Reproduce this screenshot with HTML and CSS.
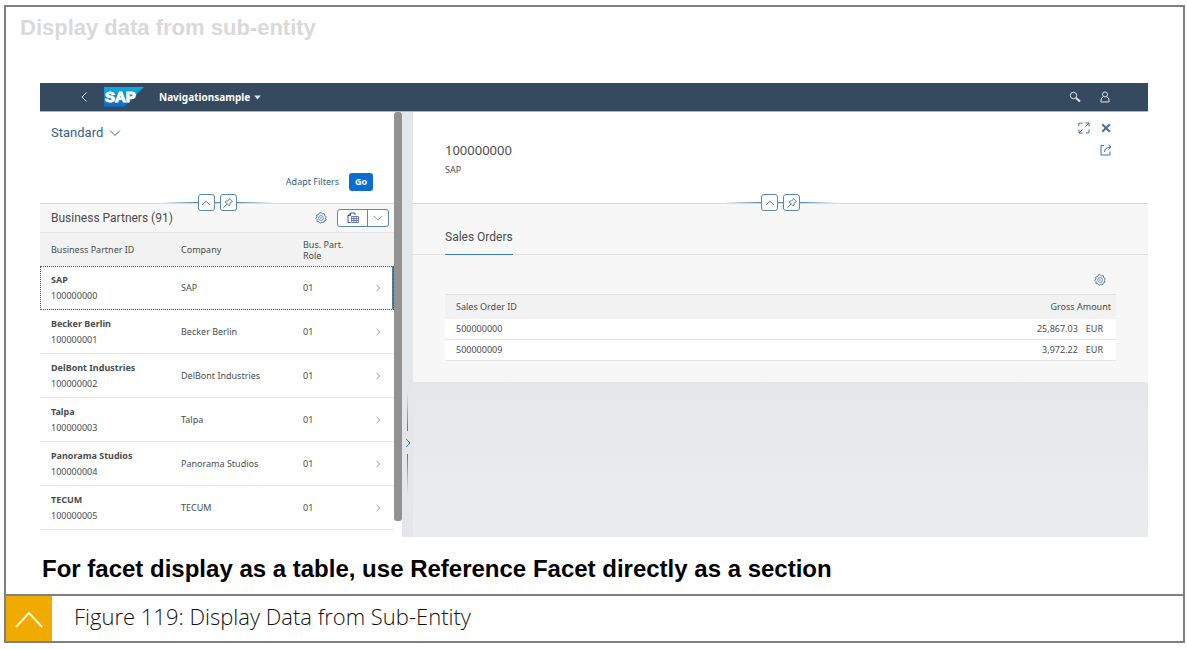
FILE: index.html
```html
<!DOCTYPE html>
<html lang="en">
<head>
<meta charset="utf-8">
<title>Display Data from Sub-Entity</title>
<link rel="stylesheet" href="styles.css">
</head>
<body>
<svg class="defs" aria-hidden="true">
  <symbol id="gear" viewBox="0 0 12 12"><path d="M6 .6 7.4 1.8 9.3 1.7 9.6 3.5 11.2 4.6 10.5 6.3 11.1 8.1 9.4 8.9 8.6 10.6 6.8 10.2 5.2 11.2 4 9.8 2.1 9.6 2.1 7.7.8 6.4 1.9 4.9 1.7 3 3.5 2.5 4.4.9Z" stroke-width=".9"/><circle cx="6" cy="6" r="2.4" stroke-width=".7"/><circle cx="6" cy="6" r=".7" stroke="none" fill="currentColor"/></symbol>
  <symbol id="up" viewBox="0 0 12 12"><path d="M2 8 6 4.3 10 8"/></symbol>
  <symbol id="down" viewBox="0 0 12 12"><path d="M1 3.5 6 8.5 11 3.5"/></symbol>
  <symbol id="right" viewBox="0 0 12 12"><path d="M4.2 2 8 6 4.2 10"/></symbol>
  <symbol id="pin" viewBox="0 0 12 12"><path d="M7.3 1.5 10.5 4.7 9.4 5 8 6.4Q8.3 8 7.2 8.9L3.1 4.8Q4.2 3.7 5.7 4L7 2.6ZM5 6.9 1.4 10.6"/></symbol>
</svg>
<figure class="frame">
  <div class="slide">
    <h1 class="slide-title">Display data from sub-entity</h1>
    <div class="app">
      <header class="shell">
        <button class="icon-button shell-back" aria-label="Back"><svg class="icon" viewBox="0 0 12 12"><path d="M8.5 1.5 4 6 8.5 10.5"/></svg></button>
        <svg class="logo" viewBox="0 0 40 20" role="img" aria-label="SAP">
          <defs><linearGradient id="sap-blue" x1="0" y1="0" x2="0" y2="1"><stop offset="0" stop-color="#0aaee8"/><stop offset="1" stop-color="#1567b5"/></linearGradient></defs>
          <path d="M0 0H40L20 20H0Z" fill="url(#sap-blue)"/>
          <text class="logo-text" x="1" y="15">SAP</text>
        </svg>
        <button class="app-title">Navigationsample<svg class="caret" viewBox="0 0 8 6"><path d="M0 .5H8L4 5.5Z"/></svg></button>
        <div class="shell-actions">
          <button class="icon-button" aria-label="Search"><svg class="icon" viewBox="0 0 12 12"><circle cx="4.5" cy="4.5" r="3.2"/><path class="thick" d="M7 7 11 10.5"/></svg></button>
          <button class="icon-button" aria-label="User"><svg class="icon" viewBox="0 0 12 12"><circle cx="6" cy="3.4" r="2.5"/><path d="M4.3 5.8Q2 6.5 2 9V11H10V9Q10 6.5 7.7 5.8"/></svg></button>
        </div>
      </header>
      <main class="columns">
        <section class="list-panel">
          <div class="panel-head filters">
            <button class="variant">Standard<svg class="icon" viewBox="0 0 12 12"><use href="#down"/></svg></button>
            <div class="filter-actions">
              <button class="link-button">Adapt Filters</button>
              <button class="go">Go</button>
            </div>
            <div class="collapser">
              <button class="square" aria-label="Collapse header"><svg class="icon"><use href="#up"/></svg></button>
              <button class="square" aria-label="Pin header"><svg class="icon"><use href="#pin"/></svg></button>
            </div>
          </div>
          <div class="toolbar">
            <h2 class="toolbar-title">Business Partners (91)</h2>
            <button class="icon-button" aria-label="Settings"><svg class="icon"><use href="#gear"/></svg></button>
            <div class="split">
              <button class="split-main" aria-label="Export"><svg class="icon export" viewBox="0 0 12 12"><path d="M3.5 10.5H1V3.5L3.5 1H8V3M1 3.5H3.5V1"/><path class="fine" d="M4.5 4.5H11.5V10.5H4.5ZM4.5 6.5H11.5M4.5 8.5H11.5M6.8 4.5V10.5M9.2 4.5V10.5"/></svg></button>
              <button class="split-menu" aria-label="Export options"><svg class="icon small"><use href="#down"/></svg></button>
            </div>
          </div>
          <table class="partners">
            <thead><tr><th class="col-id">Business Partner ID</th><th class="col-company">Company</th><th class="col-role">Bus. Part.<br>Role</th><th class="col-nav"></th></tr></thead>
            <tbody>
              <tr class="selected"><td><b>SAP</b>100000000</td><td>SAP</td><td>01</td><td class="nav"><svg class="icon small"><use href="#right"/></svg></td></tr>
              <tr><td><b>Becker Berlin</b>100000001</td><td>Becker Berlin</td><td>01</td><td class="nav"><svg class="icon small"><use href="#right"/></svg></td></tr>
              <tr><td><b>DelBont Industries</b>100000002</td><td>DelBont Industries</td><td>01</td><td class="nav"><svg class="icon small"><use href="#right"/></svg></td></tr>
              <tr><td><b>Talpa</b>100000003</td><td>Talpa</td><td>01</td><td class="nav"><svg class="icon small"><use href="#right"/></svg></td></tr>
              <tr><td><b>Panorama Studios</b>100000004</td><td>Panorama Studios</td><td>01</td><td class="nav"><svg class="icon small"><use href="#right"/></svg></td></tr>
              <tr><td><b>TECUM</b>100000005</td><td>TECUM</td><td>01</td><td class="nav"><svg class="icon small"><use href="#right"/></svg></td></tr>
            </tbody>
          </table>
        </section>
        <div class="scroll-track"><div class="scroll-thumb"></div></div>
        <div class="divider">
          <span class="divider-line"></span>
          <button class="icon-button" aria-label="Resize columns"><svg class="icon"><use href="#right"/></svg></button>
          <span class="divider-line lower"></span>
        </div>
        <section class="detail-panel">
          <div class="panel-head object">
            <div class="object-name">
              <h2 class="object-title">100000000</h2>
              <p class="object-subtitle">SAP</p>
            </div>
            <div class="object-actions">
              <button class="icon-button" aria-label="Full screen"><svg class="icon" viewBox="0 0 12 12"><path d="M.8 4V1.2H4.5M7.5 1H11V4.5M11 1 7.3 4.7M11 7.5V10.8H8M4.5 11H1V7.5M1 11 4.7 7.3"/></svg></button>
              <button class="icon-button" aria-label="Close"><svg class="icon close" viewBox="0 0 12 12"><path d="M2.2 2.2 9.8 9.8M9.8 2.2 2.2 9.8"/></svg></button>
              <button class="icon-button share" aria-label="Share"><svg class="icon" viewBox="0 0 12 12"><path d="M4 1.5H1V11H10V7.5M4.5 8Q4.5 3.5 10.5 3M8.5.8 11 3 8.5 5.3"/></svg></button>
            </div>
            <div class="collapser">
              <button class="square" aria-label="Collapse header"><svg class="icon"><use href="#up"/></svg></button>
              <button class="square" aria-label="Pin header"><svg class="icon"><use href="#pin"/></svg></button>
            </div>
          </div>
          <nav class="tabs"><button class="tab">Sales Orders</button></nav>
          <div class="section-body">
            <div class="section-tools"><button class="icon-button" aria-label="Table settings"><svg class="icon"><use href="#gear"/></svg></button></div>
            <table class="orders">
              <thead><tr><th>Sales Order ID</th><th class="amount">Gross Amount</th></tr></thead>
              <tbody>
                <tr><td>500000000</td><td class="amount">25,867.03<span class="unit">EUR</span></td></tr>
                <tr><td>500000009</td><td class="amount">3,972.22<span class="unit">EUR</span></td></tr>
              </tbody>
            </table>
          </div>
        </section>
      </main>
    </div>
    <p class="note">For facet display as a table, use Reference Facet directly as a section</p>
  </div>
  <figcaption class="caption">
    <span class="marker"><svg viewBox="0 0 46 44"><path d="M10 31 23 17 36 31"/></svg></span>
    <span class="caption-text">Figure 119: Display Data from Sub-Entity</span>
  </figcaption>
</figure>
</body>
</html>
```
FILE: styles.css
```css
* { box-sizing: border-box; }
body { margin: 0; background: #fff; font-family: "Noto Sans", sans-serif; font-size: 9px; line-height: 12px; color: #4a4c4e; }
h1, h2, p { margin: 0; font-weight: 400; }
button { margin: 0; padding: 0; border: 0; background: none; font: inherit; color: #346187; }
svg { display: block; }
.defs { position: absolute; width: 0; height: 0; }
.icon { width: 12px; height: 12px; fill: none; stroke: currentColor; stroke-width: 1; }
.small { width: 10px; height: 10px; }
.icon-button { display: flex; align-items: center; justify-content: center; width: 16px; height: 16px; color: #44719d; }

.frame { margin: 5px 3px 5px 4px; border: 2px solid #808084; }
.slide { padding: 8px 35px 11px 34px; }
.slide-title { margin-left: -20px; font: bold 22px/26px "Liberation Sans", Arial, sans-serif; color: #d9d9d9; }
.app { margin-top: 42px; }

.shell { display: flex; align-items: center; height: 29px; padding: 0 35px 0 36px; background: #354a5f; border-bottom: 1px solid #a9b7c2; }
.shell .icon-button { color: #dce6ee; }
.logo { width: 40px; height: 20px; margin-left: 12px; }
.logo-text { font: bold 15px "Liberation Sans", Arial, sans-serif; fill: #fff; stroke: #fff; stroke-width: 1; }
.app-title { display: flex; align-items: center; gap: 4px; margin-left: 15px; font-size: 10px; font-weight: 700; color: #fff; }
.caret { width: 7px; height: 5px; fill: #d5e6f2; }
.thick { stroke-width: 2; }
.shell-actions { display: flex; gap: 14px; margin-left: auto; }

.columns { display: grid; grid-template-columns: 354fr 8px 11px 735fr; min-height: 425px; }
.panel-head { position: relative; height: 92px; background: #fff; border-bottom: 1px solid #d9dcde; }
.collapser { position: absolute; left: 0; right: 0; bottom: -8px; display: flex; justify-content: center; gap: 5px; background: linear-gradient(90deg, #5b89ae00, #5b89ae 35px, #5b89ae 79px, #5b89ae00) center / 114px 1px no-repeat; }
.square { display: flex; align-items: center; justify-content: center; width: 17px; height: 17px; background: #fff; border: 1px solid #5b89ae; border-radius: 3px; color: #5480a8; }

.filters { display: flex; flex-direction: column; justify-content: space-between; padding: 12px 21px 12px 11px; }
.variant { display: flex; align-items: center; gap: 6px; align-self: flex-start; font: 13px/17px Roboto, sans-serif; }
.filter-actions { display: flex; justify-content: flex-end; align-items: center; gap: 10px; }
.go { width: 24px; height: 18px; border-radius: 3px; background: #0a6ed1; color: #fff; font-weight: 700; }
.toolbar { display: flex; align-items: center; gap: 8px; height: 29px; padding: 0 5px 0 11px; background: #f7f7f7; border-bottom: 1px solid #e5e5e5; }
.toolbar-title { margin-right: auto; font: 12px/16px Roboto, sans-serif; }
.split { display: flex; height: 18px; border: 1px solid #5b89ae; border-radius: 3px; background: #fff; }
.split button { display: flex; align-items: center; justify-content: center; }
.split .split-main { width: 30px; border-right: 1px solid #5b89ae; }
.split-menu { width: 20px; color: #6b8fb0; }
.export { color: #3a55a0; }
.fine { stroke-width: .7; }

table { width: 100%; border-collapse: separate; border-spacing: 0; table-layout: fixed; }
th { font-weight: 400; text-align: left; background: #f2f2f2; }
.partners th { height: 33px; padding: 0 0 0 11px; line-height: 11px; }
.col-id { width: 130px; }
.col-company { width: 122px; }
.col-role { width: 68px; }
.partners td { height: 44px; padding: 0 0 0 11px; border-bottom: 1px solid #e5e5e5; line-height: 16px; }
.partners b { display: block; }
.partners .nav { padding-left: 13px; color: #8a8c8e; }
.selected { outline: 1px dotted #555; outline-offset: -1px; }
.selected .nav { border-right: 2px solid #4f7ba3; }

.scroll-track { background: #fff; }
.scroll-thumb { height: 409px; border-radius: 3px; background: #929292; }
.divider { display: flex; flex-direction: column; align-items: center; padding-top: 279px; background: #e3e7e9; }
.divider .icon-button { height: 23px; }
.divider-line { width: 1px; height: 40px; background: linear-gradient(#5b89ae00, #427cac); }
.lower { background: linear-gradient(#427cac, #5b89ae00); }

.detail-panel { background: linear-gradient(#e3e7e9 60%, #ebecee); }
.object { display: flex; justify-content: space-between; padding: 8px 34px 0 32px; }
.object-name { padding-top: 20px; }
.object-title { font-size: 13px; line-height: 20px; }
.object-subtitle { margin-top: 4px; line-height: 12px; }
.object-actions { display: grid; grid-template-columns: 16px 16px; align-content: start; gap: 6px; }
.share { grid-column: 2; }
.close { stroke-width: 2; }
.tabs { display: flex; height: 51px; padding-left: 32px; background: #f7f7f7; border-bottom: 1px solid #dfe1e2; }
.tab { height: 51px; padding: 25px 0 9px; border-bottom: 1px solid #3c7cae; font: 12px/16px Roboto, sans-serif; color: #4a4c4e; }
.section-body { padding: 17px 32px 21px; background: #f7f7f7; }
.section-tools { display: flex; justify-content: flex-end; height: 22px; padding-right: 8px; }
.orders { border-top: 1px solid #e1e1e1; }
.orders th { height: 24px; padding: 0 5px 0 11px; }
.orders td { height: 21px; padding: 0 13px 0 11px; background: #fff; border-bottom: 1px solid #e5e5e5; }
.orders .amount { text-align: right; }
.orders td.amount { padding-right: 13px; }
.unit { margin-left: 8px; }

.note { margin: 18px 0 0 2px; font: bold 24px/28px "Liberation Sans", Arial, sans-serif; color: #000; }
.caption { display: flex; align-items: stretch; height: 47px; border-top: 2px solid #808084; }
.marker { width: 46px; background: #f0ab00; }
.marker svg { width: 46px; height: 44px; fill: none; stroke: #fff3c8; stroke-width: 2; }
.caption-text { padding-left: 22px; font: 300 22px/40px "Open Sans", sans-serif; color: #111; }
```
